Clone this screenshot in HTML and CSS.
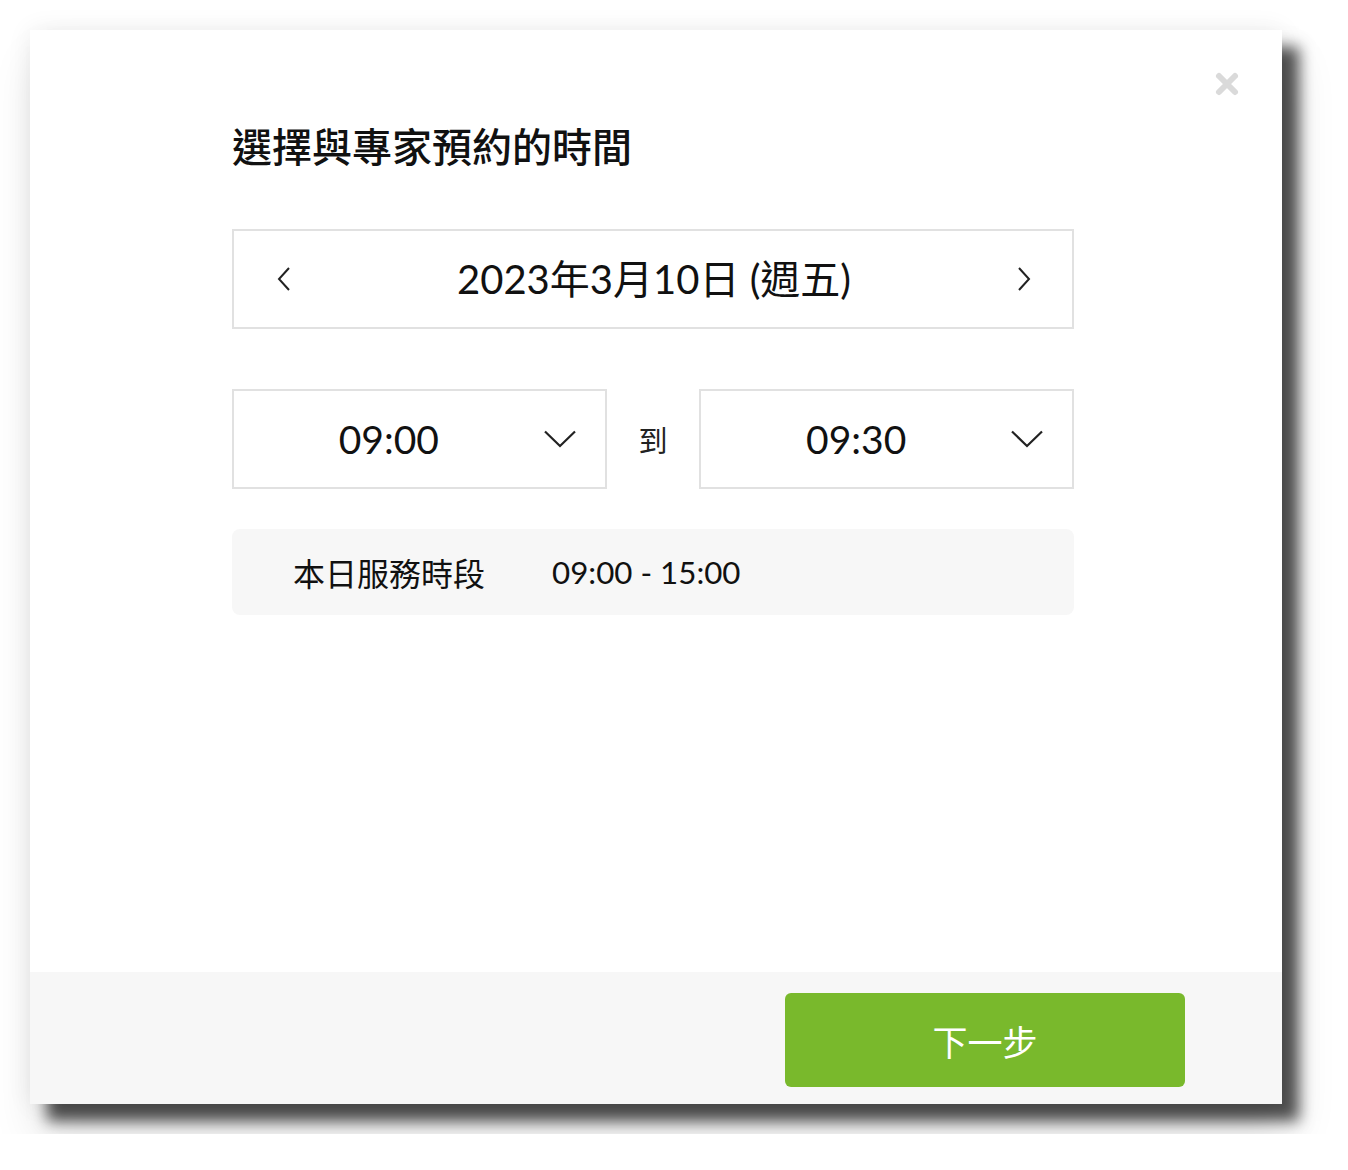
FILE: index.html
```html
<!DOCTYPE html>
<html lang="zh-Hant">
<head>
<meta charset="utf-8">
<title>選擇與專家預約的時間</title>
<link rel="stylesheet" href="styles.css">
</head>
<body>
<div class="modal">
  <button class="close" aria-label="close">
    <svg width="26" height="26" viewBox="0 0 26 26"><path d="M5 5 L21 21 M21 5 L5 21" stroke="#dadada" stroke-width="6" stroke-linecap="round" fill="none"/></svg>
  </button>
  <div class="main">
    <h1 class="title">選擇與專家預約的時間</h1>
    <div class="date-box">
      <span class="nav">
        <svg width="16" height="28" viewBox="0 0 16 28"><path d="M13 3 L3 14 L13 25" stroke="#222" stroke-width="2" fill="none"/></svg>
      </span>
      <span class="date">2023年3月10日 (週五)</span>
      <span class="nav">
        <svg width="16" height="28" viewBox="0 0 16 28"><path d="M3 3 L13 14 L3 25" stroke="#222" stroke-width="2" fill="none"/></svg>
      </span>
    </div>
    <div class="time-row">
      <div class="select">
        <span class="select-value">09:00</span>
        <svg class="caret" width="32" height="18" viewBox="0 0 32 18"><path d="M1 1.5 L16 16 L31 1.5" stroke="#222" stroke-width="2.2" fill="none"/></svg>
      </div>
      <span class="to">到</span>
      <div class="select">
        <span class="select-value">09:30</span>
        <svg class="caret" width="32" height="18" viewBox="0 0 32 18"><path d="M1 1.5 L16 16 L31 1.5" stroke="#222" stroke-width="2.2" fill="none"/></svg>
      </div>
    </div>
    <div class="info">
      <span class="info-label">本日服務時段</span>
      <span class="info-value">09:00 - 15:00</span>
    </div>
  </div>
  <div class="footer">
    <button class="next">下一步</button>
  </div>
</div>
</body>
</html>
```
FILE: styles.css
```css
* { box-sizing: border-box; }
html, body { margin: 0; padding: 0; background: #fff; }
body {
  padding: 30px;
  font-family: Lato, "Noto Sans CJK TC", sans-serif;
  color: #1a1a1a;
}
.modal {
  position: relative;
  width: 1252px;
  height: 1074px;
  background: #fff;
  display: flex;
  flex-direction: column;
  box-shadow: 17px 17px 14px rgba(0,0,0,0.68), 8px 30px 44px rgba(0,0,0,0.12), 0 0 24px rgba(0,0,0,0.07);
}
.close {
  position: absolute;
  top: 41px;
  right: 42px;
  width: 26px;
  height: 26px;
  padding: 0;
  border: 0;
  background: none;
  display: flex;
}
.main {
  flex: 1;
  padding: 88px 208px 0 202px;
}
.title {
  margin: 0;
  font-family: "Noto Sans CJK TC", sans-serif;
  font-size: 40px;
  line-height: 54px;
  font-weight: 500;
  color: #111;
}
.date-box {
  margin-top: 57px;
  height: 100px;
  border: 2px solid #e1e1e1;
  display: flex;
  align-items: center;
  padding: 0 40px 0 42px;
}
.nav { display: flex; width: 16px; }
.date {
  flex: 1;
  text-align: center;
  font-size: 40px;
  line-height: 1;
  color: #111;
}
.time-row {
  margin-top: 60px;
  display: flex;
  align-items: center;
}
.select {
  width: 375px;
  height: 100px;
  border: 2px solid #e1e1e1;
  display: flex;
  align-items: center;
  padding-right: 29px;
}
.select-value {
  flex: 1;
  text-align: center;
  font-size: 39px;
  color: #111;
}
.to {
  width: 93px;
  text-align: center;
  font-family: "Noto Sans CJK TC", sans-serif;
  font-size: 29px;
  color: #222;
}
.info {
  margin-top: 40px;
  height: 86px;
  background: #f7f7f7;
  border-radius: 8px;
  display: flex;
  align-items: center;
  padding-left: 61px;
  font-size: 32px;
  color: #111;
}
.info-label {
  font-family: "Noto Sans CJK TC", sans-serif;
  width: 259px;
}
.info-value { font-size: 31.3px; }
.footer {
  height: 132px;
  background: #f7f7f7;
  display: flex;
  justify-content: flex-end;
  align-items: flex-start;
  padding: 21px 97px 0 0;
}
.next {
  width: 400px;
  height: 94px;
  border: 0;
  border-radius: 6px;
  background: #79b92c;
  color: #fff;
  font-family: "Noto Sans CJK TC", sans-serif;
  font-size: 35px;
  padding: 0;
}
```
